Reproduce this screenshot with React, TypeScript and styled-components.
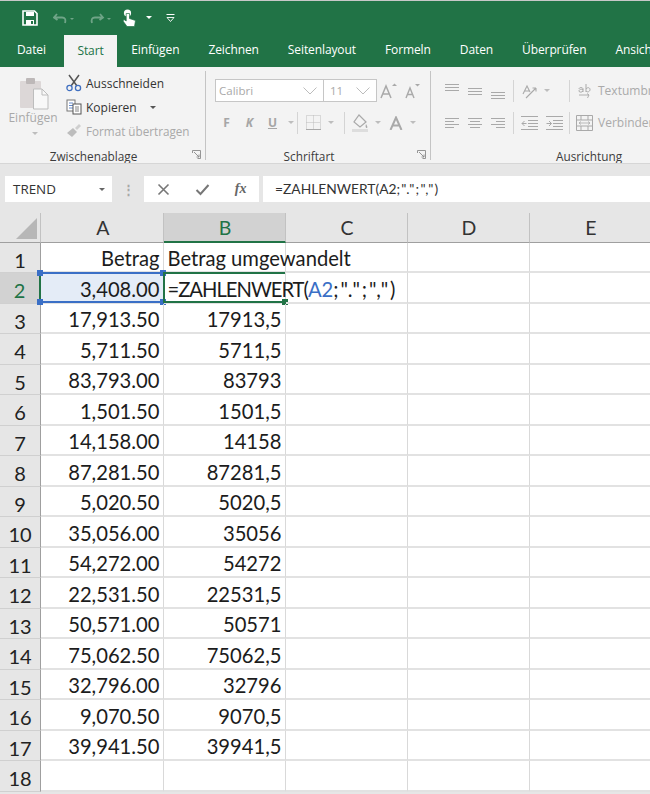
// App.tsx
import React from 'react';
import styled, { createGlobalStyle } from 'styled-components';

const GlobalStyle = createGlobalStyle`
  html, body {
    margin: 0;
    padding: 0;
    background: #fff;
    overflow: hidden;
  }
  body {
    font-family: "Open Sans", "Noto Sans", sans-serif;
  }
`;

const Window = styled.div`
  width: 650px;
  height: 794px;
  overflow: hidden;
  background: #e6e6e6;
  border-top: 1px solid #c8c8c8;
  box-sizing: border-box;
`;

const TitleBar = styled.div`
  height: 33px;
  background: #217346;
  display: flex;
  align-items: center;
  padding-left: 22px;
`;

const QuickButton = styled.div<{ $w: number; $dim?: boolean }>`
  width: ${p => p.$w}px;
  flex: none;
  display: flex;
  justify-content: center;
  align-items: center;
  opacity: ${p => (p.$dim ? 0.35 : 1)};
`;

const TabBar = styled.div`
  height: 33px;
  background: #217346;
  display: flex;
  align-items: flex-end;
  padding-left: 3px;
`;

const Tab = styled.div<{ $active?: boolean; $first?: boolean }>`
  height: ${p => (p.$active ? 32 : 33)}px;
  line-height: 31px;
  padding: 0 ${p => (p.$active ? 13 : p.$first ? 14 : 14.5)}px;
  margin-right: ${p => (p.$first ? 4.5 : 0)}px;
  font-size: 12px;
  letter-spacing: -0.1px;
  color: ${p => (p.$active ? '#217346' : '#fff')};
  background: ${p => (p.$active ? '#f3f3f3' : 'transparent')};
  white-space: nowrap;
`;

const Ribbon = styled.div`
  height: 97px;
  background: #f3f3f3;
  display: flex;
  overflow: hidden;
  border-bottom: 1px solid #d6d6d6;
  box-sizing: border-box;
`;

const Group = styled.div<{ $w: number }>`
  width: ${p => p.$w}px;
  flex: none;
  height: 89px;
  margin-top: 4px;
  position: relative;
  display: flex;
  flex-direction: column;
  border-right: 1px solid #c4c4c4;
  box-sizing: border-box;
  &:last-child {
    border-right: none;
  }
`;

const GroupBody = styled.div`
  flex: 1;
  display: flex;
  min-height: 0;
`;

const GroupLabel = styled.div<{ $shift?: number }>`
  height: 16px;
  margin-bottom: -4px;
  padding-right: ${p => p.$shift ?? 0}px;
  line-height: 16px;
  text-align: center;
  font-size: 11.8px;
  color: #3c3c3c;
`;

const Launcher = styled.div`
  position: absolute;
  right: 4px;
  bottom: 1px;
  width: 9px;
  height: 9px;
  display: flex;
`;

const PasteButton = styled.div`
  width: 65px;
  flex: none;
  display: flex;
  flex-direction: column;
  align-items: center;
  padding: 5px 0 0 4px;
  box-sizing: border-box;
  color: #a9a9a9;
  font-size: 12px;
  line-height: 14px;
`;

const PasteLabel = styled.div`
  margin: 1px 0 7px -3px;
`;

const SmallCaret = styled.div<{ $color?: string; $ml?: number }>`
  width: 0;
  height: 0;
  flex: none;
  margin-left: ${p => p.$ml ?? 0}px;
  border-left: 3px solid transparent;
  border-right: 3px solid transparent;
  border-top: 3px solid ${p => p.$color ?? '#bdbdbd'};
`;

const ClipboardList = styled.div`
  display: flex;
  flex-direction: column;
  margin-left: 1px;
`;

const ClipItem = styled.div<{ $dim?: boolean }>`
  height: 24px;
  flex: none;
  display: flex;
  align-items: center;
  gap: 4px;
  font-size: ${p => (p.$dim ? 11.7 : 12)}px;
  color: ${p => (p.$dim ? '#a9a9a9' : '#333')};
  white-space: nowrap;
`;

const ToolRows = styled.div<{ $pl: number }>`
  display: flex;
  flex-direction: column;
  gap: 9px;
  flex: none;
  padding: 8px 0 0 ${p => p.$pl}px;
`;

const ToolRow = styled.div`
  height: 23px;
  display: flex;
  align-items: center;
`;

const Combo = styled.div<{ $w: number }>`
  width: ${p => p.$w}px;
  height: 23px;
  flex: none;
  margin-right: -1px;
  box-sizing: border-box;
  border: 1px solid #c6c6c6;
  background: #fff;
  display: flex;
  align-items: center;
  justify-content: space-between;
  padding: 0 6px 0 3px;
  font-size: 11.5px;
  color: #a9a9a9;
`;

const Tool = styled.div<{ $w: number }>`
  width: ${p => p.$w}px;
  flex: none;
  height: 23px;
  display: flex;
  align-items: center;
  justify-content: center;
  color: #a6a6a6;
  font-size: 12px;
  font-weight: 700;
`;

const ToolSep = styled.div<{ $ml?: number }>`
  width: 1px;
  height: 22px;
  flex: none;
  margin-left: ${p => p.$ml ?? 0}px;
  background: #d4d4d4;
`;

const ToolText = styled.span`
  font-size: 12px;
  font-weight: 400;
  color: #aaa;
  white-space: nowrap;
`;

const AlignColumn = styled.div`
  display: flex;
  flex-direction: column;
  gap: 9px;
  padding: 8px 0 0 5px;
  flex: none;
`;

const FormulaStrip = styled.div`
  height: 49px;
  background: #e6e6e6;
  padding: 12px 0 0 5px;
  box-sizing: border-box;
  display: flex;
  align-items: flex-start;
`;

const NameBox = styled.div`
  width: 107px;
  height: 26px;
  flex: none;
  background: #fff;
  box-sizing: border-box;
  display: flex;
  align-items: center;
  justify-content: space-between;
  padding: 0 7px 0 8px;
  font-size: 13.4px;
  color: #333;
`;

const Grip = styled.div`
  width: 32px;
  flex: none;
  height: 26px;
  display: flex;
  align-items: center;
  justify-content: center;
  color: #a8a8a8;
  font-size: 13px;
  font-weight: 700;
`;

const FxBox = styled.div`
  width: 115px;
  height: 26px;
  flex: none;
  background: #fff;
  display: flex;
  align-items: center;
  justify-content: space-around;
  box-sizing: border-box;
  color: #777;
`;

const FxGlyph = styled.span`
  font-family: "Liberation Serif", serif;
  font-style: italic;
  font-size: 14px;
  font-weight: 700;
  color: #666;
`;

const FormulaInput = styled.div`
  flex: 1;
  height: 26px;
  margin-left: 4px;
  background: #fff;
  line-height: 26px;
  padding-left: 12px;
  font-family: Lato, "Liberation Sans", sans-serif;
  font-size: 13.8px;
  color: #333;
  white-space: nowrap;
`;

const Sheet = styled.div`
  display: grid;
  grid-template-columns: 41px 122.5px 122px 122px 122px 122px;
  grid-template-rows: 29.5px repeat(18, 30.53px);
  background: #fff;
  position: relative;
`;

const Corner = styled.div`
  background: #e6e6e6;
  border-right: 1px solid #c2c2c2;
  border-bottom: 1px solid #9f9f9f;
  box-sizing: border-box;
  display: flex;
  align-items: flex-end;
  justify-content: flex-end;
  padding: 0 3px 3px 0;
`;

const CornerMark = styled.div`
  width: 0;
  height: 0;
  border-left: 21px solid transparent;
  border-bottom: 21px solid #b7b7b7;
`;

const ColHead = styled.div<{ $on?: boolean }>`
  background: ${p => (p.$on ? '#d2d2d2' : '#e6e6e6')};
  color: ${p => (p.$on ? '#217346' : '#333')};
  border-right: 1px solid #c2c2c2;
  border-bottom: ${p => (p.$on ? '2px solid #217346' : '1px solid #9f9f9f')};
  box-sizing: border-box;
  text-align: center;
  padding-left: 2px;
  line-height: 29px;
  font-family: Lato, "Liberation Sans", sans-serif;
  font-size: 19.5px;
`;

const RowHead = styled.div<{ $on?: boolean }>`
  background: ${p => (p.$on ? '#d2d2d2' : '#e6e6e6')};
  color: ${p => (p.$on ? '#217346' : '#222')};
  border-right: ${p => (p.$on ? '2px solid #217346' : '1px solid #9f9f9f')};
  border-bottom: 1px solid #d0d0d0;
  box-sizing: border-box;
  text-align: center;
  padding-top: 4px;
  line-height: 26px;
  font-family: Lato, "Liberation Sans", sans-serif;
  font-size: 20px;
`;

const Cell = styled.div<{ $left?: boolean; $sel?: boolean }>`
  position: relative;
  box-sizing: border-box;
  background: ${p => (p.$sel ? '#e4ecf7' : 'transparent')};
  border-right: 1px solid #d9d9d9;
  border-bottom: 2px solid #e2e2e2;
  padding: 3.5px ${p => (p.$left ? 0 : 3)}px 0 ${p => (p.$left ? 4 : 0)}px;
  line-height: 25px;
  text-align: ${p => (p.$left ? 'left' : 'right')};
  white-space: nowrap;
  font-family: Lato, "Liberation Sans", sans-serif;
  font-size: 20.2px;
  color: #1c1c1c;
`;

const RangeRef = styled.span`
  color: #3a6fc6;
`;

const Spaced = styled.span<{ $gap: number }>`
  letter-spacing: ${p => p.$gap}px;
`;

const Frame = styled.div<{ $color: string; $leftEdge?: boolean }>`
  position: absolute;
  inset: -1px 0 -1px -1px;
  border-style: solid;
  border-color: ${p => p.$color};
  border-width: 2px 0 2px ${p => (p.$leftEdge ? 2 : 0)}px;
  pointer-events: none;
`;

const Handle = styled.div<{ $color: string; $x: 'left' | 'right'; $y: 'top' | 'bottom' }>`
  position: absolute;
  width: 6px;
  height: 6px;
  background: ${p => p.$color};
  ${p => p.$x}: -3px;
  ${p => p.$y}: -4px;
`;

const Ico = ({ w, h, children }: { w: number; h: number; children: React.ReactNode }) => (
  <svg width={w} height={h} viewBox={`0 0 ${w} ${h}`} fill="none" style={{ display: 'block', flex: 'none' }}>
    {children}
  </svg>
);

const LinesIcon = ({ tops, widths }: { tops: number[]; widths: [number, number][] }) => (
  <Ico w={16} h={16}>
    {tops.map((t, i) => (
      <rect key={i} x={widths[i][0]} y={t} width={widths[i][1]} height={1} fill="#a9a9a9" />
    ))}
  </Ico>
);

const tripleFull: [number, number][] = [[1, 14], [1, 14], [1, 14]];
const alignLeft: [number, number][] = [[1, 14], [1, 9], [1, 14], [1, 9]];
const alignCenter: [number, number][] = [[1, 14], [3, 10], [1, 14], [3, 10]];
const alignRight: [number, number][] = [[1, 14], [6, 9], [1, 14], [6, 9]];

const columns = ['A', 'B', 'C', 'D', 'E'];

const data: [string, string][] = [
  ['17,913.50', '17913,5'],
  ['5,711.50', '5711,5'],
  ['83,793.00', '83793'],
  ['1,501.50', '1501,5'],
  ['14,158.00', '14158'],
  ['87,281.50', '87281,5'],
  ['5,020.50', '5020,5'],
  ['35,056.00', '35056'],
  ['54,272.00', '54272'],
  ['22,531.50', '22531,5'],
  ['50,571.00', '50571'],
  ['75,062.50', '75062,5'],
  ['32,796.00', '32796'],
  ['9,070.50', '9070,5'],
  ['39,941.50', '39941,5'],
];

const tabs = ['Einfügen', 'Zeichnen', 'Seitenlayout', 'Formeln', 'Daten', 'Überprüfen', 'Ansicht'];

const LauncherIcon = () => (
  <Launcher>
    <Ico w={9} h={9}>
      <path d="M0.5 3V0.5H8.5V8.5H5.5M2 2L7 7M7 4.5V7H4.5" stroke="#8a8a8a" strokeWidth="0.9" />
    </Ico>
  </Launcher>
);

const App: React.FC = () => {
  return (
    <Window>
      <GlobalStyle />
      <TitleBar>
        <QuickButton $w={16}>
          <Ico w={16} h={16}>
            <path d="M1 1H12.5L15 3.5V15H1Z" stroke="#fff" strokeWidth="1.6" />
            <rect x="4" y="2" width="8" height="4" fill="#fff" />
            <rect x="4" y="10" width="8" height="5" fill="#fff" />
            <rect x="9" y="11" width="2" height="3" fill="#217346" />
          </Ico>
        </QuickButton>
        <QuickButton $w={52} $dim>
          <Ico w={22} h={14}>
            <path d="M4 3L1 6.5L4.5 9M1.5 6.5H9C12 6.5 13 8.5 12 12" stroke="#fff" strokeWidth="1.8" />
            <path d="M17 7H21L19 9Z" fill="#fff" />
          </Ico>
        </QuickButton>
        <QuickButton $w={22} $dim>
          <Ico w={22} h={14}>
            <path d="M10 3L13 6.5L9.5 9M12.5 6.5H5C2 6.5 1 8.5 2 12" stroke="#fff" strokeWidth="1.8" />
            <path d="M17 7H21L19 9Z" fill="#fff" />
          </Ico>
        </QuickButton>
        <QuickButton $w={34}>
          <Ico w={14} h={18}>
            <circle cx="5.5" cy="4" r="3.6" fill="#fff" />
            <path d="M4.2 4.5V12L2 10.5L1 12L5 17.5H12.5L13.5 11.5L7.5 9.5V4.5Z" fill="#fff" stroke="#217346" strokeWidth="0.7" />
          </Ico>
        </QuickButton>
        <QuickButton $w={5}>
          <SmallCaret $color="#fff" />
        </QuickButton>
        <QuickButton $w={38}>
          <Ico w={9} h={8}>
            <rect x="0.5" y="0" width="8" height="1" fill="#fff" />
            <path d="M1 3.5H8L4.5 7.5Z" stroke="#fff" strokeWidth="0.9" />
          </Ico>
        </QuickButton>
      </TitleBar>

      <TabBar>
        <Tab $first>Datei</Tab>
        <Tab $active>Start</Tab>
        {tabs.map(t => (
          <Tab key={t}>{t}</Tab>
        ))}
      </TabBar>

      <Ribbon>
        <Group $w={206}>
          <GroupBody>
            <PasteButton>
              <Ico w={32} h={34}>
                <rect x="1" y="5" width="21" height="27" rx="1" fill="#dcd7d7" />
                <rect x="7" y="2" width="9" height="6" rx="1" fill="#bdb8b8" />
                <path d="M14.5 13H23L29 19V33H14.5Z" fill="#f8f8f8" stroke="#bdbdbd" />
                <path d="M23 13V19H29" stroke="#bdbdbd" />
              </Ico>
              <PasteLabel>Einfügen</PasteLabel>
              <SmallCaret $color="#bdbdbd" />
            </PasteButton>
            <ClipboardList>
              <ClipItem>
                <Ico w={16} h={18}>
                  <path d="M3 1L11 12M13 1L5 12" stroke="#555" strokeWidth="1.5" />
                  <circle cx="3.5" cy="14" r="2.6" stroke="#3f6fc0" strokeWidth="1.3" />
                  <circle cx="12" cy="14" r="2.6" stroke="#3f6fc0" strokeWidth="1.3" />
                </Ico>
                Ausschneiden
              </ClipItem>
              <ClipItem>
                <Ico w={16} h={16}>
                  <rect x="1" y="1" width="8" height="11" fill="#fff" stroke="#777" />
                  <path d="M3 4H7M3 6.5H7M3 9H7" stroke="#3f6fc0" strokeWidth="0.8" />
                  <rect x="7" y="5" width="8" height="10" fill="#fff" stroke="#555" />
                  <path d="M9 8H13M9 10H13M9 12H13" stroke="#666" strokeWidth="0.8" />
                </Ico>
                Kopieren
                <SmallCaret $color="#555" $ml={9} />
              </ClipItem>
              <ClipItem $dim>
                <Ico w={16} h={16}>
                  <path d="M1 10L7 5L11 9L6 14Z" fill="#bdbdbd" />
                  <path d="M9 5L13 1L15 3L11 7Z" fill="#cfcfcf" />
                </Ico>
                Format übertragen
              </ClipItem>
            </ClipboardList>
          </GroupBody>
          <GroupLabel $shift={18}>Zwischenablage</GroupLabel>
          <LauncherIcon />
        </Group>

        <Group $w={225}>
          <GroupBody>
            <ToolRows $pl={9}>
              <ToolRow>
                <Combo $w={109}>
                  Calibri
                  <Ico w={14} h={8}>
                    <path d="M0.5 0.5L7 7L13.5 0.5" stroke="#bcbcbc" />
                  </Ico>
                </Combo>
                <Combo $w={54}>
                  &nbsp;11
                  <Ico w={14} h={8}>
                    <path d="M0.5 0.5L7 7L13.5 0.5" stroke="#bcbcbc" />
                  </Ico>
                </Combo>
                <Tool $w={25}>
                  <Ico w={17} h={16}>
                    <path d="M1 15L6 3L11 15M3 11H9" stroke="#a9a9a9" strokeWidth="1.5" />
                    <path d="M12 3L14.5 0.5L17 3Z" fill="#a9a9a9" />
                  </Ico>
                </Tool>
                <Tool $w={22}>
                  <Ico w={17} h={16}>
                    <path d="M2 15L6 5L10 15M3.5 11.5H8.5" stroke="#a9a9a9" strokeWidth="1.4" />
                    <path d="M11 1H16L13.5 3.5Z" fill="#a9a9a9" />
                  </Ico>
                </Tool>
              </ToolRow>
              <ToolRow>
                <Tool $w={23}>F</Tool>
                <Tool $w={23}>
                  <i>K</i>
                </Tool>
                <Tool $w={23}>
                  <u>U</u>
                </Tool>
                <Tool $w={13}>
                  <SmallCaret />
                </Tool>
                <ToolSep />
                <Tool $w={30}>
                  <Ico w={15} h={15}>
                    <path d="M0.5 0.5H14.5V14.5H0.5ZM7.5 0.5V14.5M0.5 7.5H14.5" stroke="#bdbdbd" strokeDasharray="1 1" />
                    <path d="M0 14.5H15" stroke="#a9a9a9" />
                  </Ico>
                </Tool>
                <SmallCaret />
                <Tool $w={10} />
                <ToolSep />
                <Tool $w={30}>
                  <Ico w={17} h={18}>
                    <path d="M7 1L14 8L8 13L2 8Z" stroke="#a9a9a9" strokeWidth="1.2" />
                    <path d="M14 10C15 12 16 13 15 14C14 14.5 13 13 14 10Z" fill="#a9a9a9" />
                    <rect x="0" y="15" width="16" height="3" fill="#dddddd" />
                  </Ico>
                </Tool>
                <SmallCaret />
                <Tool $w={29}>
                  <Ico w={14} h={14}>
                    <path d="M1.5 14L7 1.5L12.5 14M3.5 9.5H10.5" stroke="#a9a9a9" strokeWidth="2" />
                  </Ico>
                </Tool>
                <SmallCaret />
              </ToolRow>
            </ToolRows>
          </GroupBody>
          <GroupLabel $shift={18}>Schriftart</GroupLabel>
          <LauncherIcon />
        </Group>

        <Group $w={316}>
          <GroupBody>
            <ToolRows $pl={10}>
              <ToolRow>
                <Tool $w={22}>
                  <LinesIcon tops={[1, 4, 7]} widths={tripleFull} />
                </Tool>
                <Tool $w={23}>
                  <LinesIcon tops={[5, 8, 11]} widths={tripleFull} />
                </Tool>
                <Tool $w={23}>
                  <LinesIcon tops={[9, 12, 15]} widths={tripleFull} />
                </Tool>
                <ToolSep $ml={4} />
                <Tool $w={30}>
                  <Ico w={16} h={16}>
                    <path d="M2 11L6 3L9 9M3.5 8H8" stroke="#a9a9a9" strokeWidth="1.1" />
                    <path d="M5 15L15 5M15 5H11.5M15 5V8.5" stroke="#a9a9a9" strokeWidth="1.1" />
                  </Ico>
                </Tool>
                <SmallCaret />
              </ToolRow>
              <ToolRow>
                <Tool $w={22}>
                  <LinesIcon tops={[3, 6, 9, 12]} widths={alignLeft} />
                </Tool>
                <Tool $w={23}>
                  <LinesIcon tops={[3, 6, 9, 12]} widths={alignCenter} />
                </Tool>
                <Tool $w={23}>
                  <LinesIcon tops={[3, 6, 9, 12]} widths={alignRight} />
                </Tool>
                <ToolSep $ml={4} />
                <Tool $w={30}>
                  <Ico w={17} h={14}>
                    <path d="M0 0.5H17M7 4.5H17M7 7.5H17M7 10.5H17M0 13.5H17" stroke="#a9a9a9" />
                    <path d="M5.5 7.5H1M1 7.5L3.5 5M1 7.5L3.5 10" stroke="#a9a9a9" />
                  </Ico>
                </Tool>
                <Tool $w={20}>
                  <Ico w={17} h={14}>
                    <path d="M0 0.5H17M7 4.5H17M7 7.5H17M7 10.5H17M0 13.5H17" stroke="#a9a9a9" />
                    <path d="M0.5 7.5H5.5M5.5 7.5L3 5M5.5 7.5L3 10" stroke="#a9a9a9" />
                  </Ico>
                </Tool>
              </ToolRow>
            </ToolRows>
            <AlignColumn>
              <ToolRow>
                <ToolSep />
                <Tool $w={28}>
                  <Ico w={15} h={16}>
                    <path d="M2 6C2 4 6 4 6 6V9M6 7C6 5.5 2 6 2 8C2 9.5 5 9.5 6 8M9 1V9M9 6C11 3.5 13 5 13 6.5C13 9 10 9.5 9 8" stroke="#a9a9a9" strokeWidth="1" />
                    <path d="M2 12H12L10.5 15M12 12L10 10.5" stroke="#a9a9a9" strokeWidth="0.9" />
                  </Ico>
                </Tool>
                <ToolText>Textumbruch</ToolText>
              </ToolRow>
              <ToolRow>
                <ToolSep />
                <Tool $w={28}>
                  <Ico w={17} h={16}>
                    <path d="M0.5 0.5H16.5V15.5H0.5ZM0.5 5H16.5M0.5 11H16.5M5 0.5V5M12 0.5V5M5 11V15.5M12 11V15.5" stroke="#a9a9a9" />
                    <path d="M3 8H14M3 8L5 6.5M3 8L5 9.5M14 8L12 6.5M14 8L12 9.5" stroke="#a9a9a9" strokeWidth="0.8" />
                  </Ico>
                </Tool>
                <ToolText>Verbinden und zentrieren</ToolText>
              </ToolRow>
            </AlignColumn>
          </GroupBody>
          <GroupLabel>Ausrichtung</GroupLabel>
        </Group>
      </Ribbon>

      <FormulaStrip>
        <NameBox>
          TREND
          <SmallCaret $color="#666" />
        </NameBox>
        <Grip>⋮</Grip>
        <FxBox>
          <Ico w={13} h={13}>
            <path d="M1.5 1.5L11.5 11.5M11.5 1.5L1.5 11.5" stroke="#777" strokeWidth="1.6" />
          </Ico>
          <Ico w={15} h={13}>
            <path d="M1.5 7L5.5 11L13.5 2" stroke="#777" strokeWidth="2" />
          </Ico>
          <FxGlyph>fx</FxGlyph>
        </FxBox>
        <FormulaInput>
          =ZAHLENWERT(A2<Spaced $gap={1.2}>;&quot;.&quot;;&quot;,&quot;</Spaced>)
        </FormulaInput>
      </FormulaStrip>

      <Sheet>
        <Corner>
          <CornerMark />
        </Corner>
        {columns.map(c => (
          <ColHead key={c} $on={c === 'B'}>
            {c}
          </ColHead>
        ))}

        <RowHead>1</RowHead>
        <Cell>Betrag</Cell>
        <Cell $left>Betrag umgewandelt</Cell>
        <Cell />
        <Cell />
        <Cell />

        <RowHead $on>2</RowHead>
        <Cell $sel>
          3,408.00
          <Frame $color="#3a6fc6">
            <Handle $color="#3a6fc6" $x="left" $y="top" />
            <Handle $color="#3a6fc6" $x="right" $y="top" />
            <Handle $color="#3a6fc6" $x="left" $y="bottom" />
            <Handle $color="#3a6fc6" $x="right" $y="bottom" />
          </Frame>
        </Cell>
        <Cell $left>
          <Spaced $gap={-1}>=ZAHLENWERT(</Spaced>
          <RangeRef>A2</RangeRef>
          <Spaced $gap={1.9}>;&quot;.&quot;;&quot;,&quot;</Spaced>)
          <Frame $color="#217346" $leftEdge>
            <Handle $color="#217346" $x="right" $y="bottom" />
          </Frame>
        </Cell>
        <Cell />
        <Cell />
        <Cell />

        {data.map(([a, b], i) => (
          <React.Fragment key={a}>
            <RowHead>{i + 3}</RowHead>
            <Cell>{a}</Cell>
            <Cell>{b}</Cell>
            <Cell />
            <Cell />
            <Cell />
          </React.Fragment>
        ))}

        <RowHead>18</RowHead>
        <Cell />
        <Cell />
        <Cell />
        <Cell />
        <Cell />
      </Sheet>
    </Window>
  );
};

export default App;
